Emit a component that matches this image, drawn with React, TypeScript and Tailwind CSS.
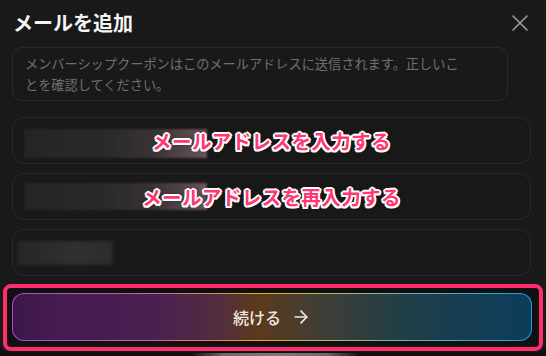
import { X, ArrowRight } from 'lucide-react';

const outline =
  '[text-shadow:2px_0_0_#fff,-2px_0_0_#fff,0_2px_0_#fff,0_-2px_0_#fff,1.5px_1.5px_0_#fff,-1.5px_1.5px_0_#fff,1.5px_-1.5px_0_#fff,-1.5px_-1.5px_0_#fff,0_0_6px_rgba(0,0,0,0.6)]';

function Field({
  hint,
  blurClass,
}: {
  hint?: string;
  blurClass: string;
}) {
  return (
    <div className="relative h-[47px] w-[519px] rounded-[12px] border border-[#2a2a2a] bg-[#191919]">
      <div className={blurClass} />
      {hint && (
        <div
          className={`absolute inset-0 flex items-center justify-center text-[19.5px] font-bold tracking-[0.4px] text-[#ff3773] ${outline}`}
        >
          {hint}
        </div>
      )}
    </div>
  );
}

export default function App() {
  return (
    <div
      className="h-[356px] w-[546px] overflow-hidden bg-[#0f0f0f]"
      style={{ fontFamily: '"Noto Sans CJK JP", "Noto Sans", sans-serif' }}
    >
      <div className="flex h-[352px] flex-col rounded-b-[8px] bg-[#191919] px-3 pt-[9px]">
        <div className="flex h-[28px] items-center justify-between">
          <h2 className="pl-px text-[20px] font-bold leading-[28px] text-[#f4f4f4]">メールを追加</h2>
          <button className="text-[#9a9a9a]" aria-label="閉じる">
            <X size={28} strokeWidth={1.4} />
          </button>
        </div>

        <div className="mt-[10px] w-[496px] rounded-[10px] border border-[#2a2a2a] py-[5px] pl-[12px] pr-[40px] text-[13.2px] leading-[21px] text-[#707070]">
          メンバーシップクーポンはこのメールアドレスに送信されます。正しいことを確認してください。
        </div>

        <div className="mt-[16px] flex flex-col gap-[9px]">
          <Field
            hint="メールアドレスを入力する"
            blurClass="absolute left-[11px] top-[11px] h-[29px] w-[183px] bg-[linear-gradient(90deg,#252525_0%,#2a2a2a_45%,#3a3234_70%,#6b555b_100%)] blur-[1px]"
          />
          <Field
            hint="メールアドレスを再入力する"
            blurClass="absolute left-[11px] top-[9px] h-[27px] w-[183px] bg-[linear-gradient(90deg,#252525_0%,#2a2a2a_45%,#3a3234_70%,#6b555b_100%)] blur-[1px]"
          />
          <Field blurClass="absolute left-[4px] top-[11px] h-[24px] w-[96px] bg-[linear-gradient(90deg,#262626_0%,#303030_60%,#2c2c2c_100%)] blur-[1.5px]" />
        </div>

        <div className="-ml-[9px] mt-[8px] h-[67px] w-[540px] rounded-[8px] border-4 border-[#ff2d6b] bg-[#101010] pb-[6px] pl-[5px] pr-[7px] pt-[5px]">
          <div className="h-[48px] w-full rounded-[12px] bg-[linear-gradient(90deg,#a94ad2_0%,#c060b0_22%,#e08a50_40%,#f0a030_47%,#b8b870_62%,#5ab0c8_80%,#2898e0_100%)] p-px">
            <button className="flex h-full w-full items-center justify-center gap-[10px] rounded-[11px] bg-[linear-gradient(90deg,#3c1848_0%,#451b52_8%,#4a2050_28%,#532d3e_40%,#5c3a1c_47%,#3e3e36_60%,#1f3e48_76%,#0c3d5c_100%)] text-[16px] font-medium text-[#efe9e0]">
              <span>続ける</span>
              <ArrowRight size={20} strokeWidth={2} />
            </button>
          </div>
        </div>
      </div>
      <div className="flex justify-center pl-[3px] pt-[1px]">
        <div className="h-[3px] w-[170px] bg-[linear-gradient(90deg,transparent,#6a6a6a_20%,#7a7a7a_50%,#6a6a6a_80%,transparent)]" />
      </div>
    </div>
  );
}
